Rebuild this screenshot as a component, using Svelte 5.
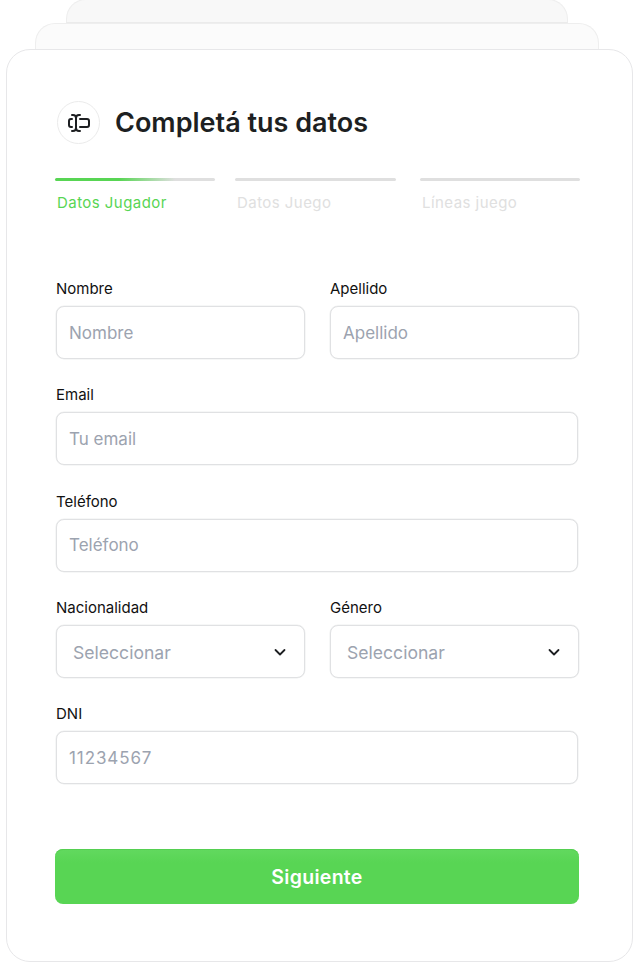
<script>
  const steps = [
    { label: 'Datos Jugador', active: true },
    { label: 'Datos Juego', active: false },
    { label: 'Líneas juego', active: false }
  ];
</script>

<div class="stack">
  <div class="sheet back-far"></div>
  <div class="sheet back-near"></div>

  <main class="card">
    <header class="head">
      <span class="badge">
        <svg width="24" height="24" viewBox="0 0 24 24" fill="none" stroke="#1d1f22" stroke-width="2" stroke-linecap="round" stroke-linejoin="round">
          <path d="M5 4h1a3 3 0 0 1 3 3 3 3 0 0 1 3-3h1" />
          <path d="M13 20h-1a3 3 0 0 1-3-3 3 3 0 0 1-3 3H5" />
          <path d="M5 16H4a2 2 0 0 1-2-2v-4a2 2 0 0 1 2-2h1" />
          <path d="M13 8h7a2 2 0 0 1 2 2v4a2 2 0 0 1-2 2h-7" />
          <path d="M9 7v10" />
        </svg>
      </span>
      <h1>Completá tus datos</h1>
    </header>

    <ol class="steps">
      {#each steps as step}
        <li class="step" class:active={step.active}>
          <span class="bar"></span>
          <span class="step-label">{step.label}</span>
        </li>
      {/each}
    </ol>

    <form class="form" on:submit|preventDefault>
      <div class="row two">
        <label class="field">
          <span>Nombre</span>
          <input type="text" placeholder="Nombre" />
        </label>
        <label class="field">
          <span>Apellido</span>
          <input type="text" placeholder="Apellido" />
        </label>
      </div>

      <label class="field">
        <span>Email</span>
        <input type="email" placeholder="Tu email" />
      </label>

      <label class="field">
        <span>Teléfono</span>
        <input type="tel" placeholder="Teléfono" />
      </label>

      <div class="row two">
        <label class="field">
          <span>Nacionalidad</span>
          <span class="select-wrap">
            <select><option>Seleccionar</option></select>
            <svg class="chevron" width="16" height="16" viewBox="0 0 16 16" fill="none" stroke="#1d1f22" stroke-width="1.8" stroke-linecap="round" stroke-linejoin="round">
              <path d="M3.5 6l4.5 4.5L12.5 6" />
            </svg>
          </span>
        </label>
        <label class="field">
          <span>Género</span>
          <span class="select-wrap">
            <select><option>Seleccionar</option></select>
            <svg class="chevron" width="16" height="16" viewBox="0 0 16 16" fill="none" stroke="#1d1f22" stroke-width="1.8" stroke-linecap="round" stroke-linejoin="round">
              <path d="M3.5 6l4.5 4.5L12.5 6" />
            </svg>
          </span>
        </label>
      </div>

      <label class="field">
        <span>DNI</span>
        <input class="dni" type="text" placeholder="11234567" />
      </label>

      <button type="submit">Siguiente</button>
    </form>
  </main>
</div>

<style>
  :global(body) {
    background: #fff;
    font-family: Inter, "Liberation Sans", sans-serif;
  }

  .stack {
    display: flex;
    flex-direction: column;
    height: 962px;
    overflow: hidden;
  }

  .sheet {
    border: 1px solid #eeeeee;
    border-bottom: 0;
    background: #fbfbfb;
    flex: none;
  }
  .back-far {
    height: 24px;
    margin: -1px 72px 0 66px;
    border-radius: 20px 20px 0 0;
    background: #f8f8f8;
    border-bottom: 1px solid #ebebeb;
    box-sizing: border-box;
  }
  .back-near {
    height: 26px;
    margin: 0 41px 0 35px;
    border-radius: 20px 20px 0 0;
    box-sizing: border-box;
  }

  .card {
    box-sizing: border-box;
    height: 913px;
    margin: 0 7px 0 6px;
    padding: 51px 54px 0 48px;
    background: #fff;
    border: 1px solid #e7e7e9;
    border-radius: 24px;
  }

  .head {
    display: flex;
    align-items: center;
    gap: 15px;
    padding-left: 2px;
  }
  .badge {
    box-sizing: border-box;
    width: 43px;
    height: 43px;
    display: flex;
    align-items: center;
    justify-content: center;
    border: 1px solid #ebebeb;
    border-radius: 50%;
  }
  h1 {
    margin: 0;
    font-size: 27px;
    font-weight: 600;
    line-height: 43px;
    color: #1d1f22;
  }

  .steps {
    display: flex;
    margin: 34px 0 0;
    padding: 0;
    list-style: none;
  }
  .step {
    flex: none;
    width: 160px;
    margin-right: 20px;
    display: flex;
    flex-direction: column;
    gap: 12px;
  }
  .step:nth-child(2) {
    width: 161px;
    margin-right: 24px;
  }
  .step:last-child {
    margin-right: 0;
  }
  .bar {
    height: 3px;
    border-radius: 2px;
    background: #dfdfdf;
  }
  .step.active .bar {
    background: linear-gradient(90deg, #58d554 0%, #58d554 40%, #dfdfdf 75%);
  }
  .step-label {
    padding-left: 2px;
    font-size: 15px;
    line-height: 20px;
    letter-spacing: 0.45px;
    color: #e0e0e0;
  }
  .step.active .step-label {
    color: #58d554;
  }

  .form {
    margin-top: 65px;
    display: flex;
    flex-direction: column;
    gap: 25.25px;
    padding-left: 1px;
  }
  .row.two {
    display: grid;
    grid-template-columns: 249px 249px;
    gap: 25px;
  }
  .field {
    display: flex;
    flex-direction: column;
    gap: 7px;
    font-size: 15px;
    line-height: 21px;
    color: #111;
  }
  input,
  select {
    box-sizing: border-box;
    width: 100%;
    height: 53px;
    padding: 0 12px;
    border: 1px solid #e0e1e3;
    box-shadow: 0 0 0 0.5px #eeefef;
    border-radius: 8px;
    background: #fff;
    font: inherit;
    font-size: 17px;
    color: #9ca3af;
    outline: none;
  }
  input::placeholder {
    color: #9ca3af;
    opacity: 1;
  }
  .dni {
    letter-spacing: 0.9px;
  }
  select {
    appearance: none;
    padding: 2px 0 0 16px;
    font-size: 17.6px;
  }
  .select-wrap {
    position: relative;
    display: block;
  }
  .chevron {
    position: absolute;
    right: 17px;
    top: 19px;
    pointer-events: none;
  }

  button {
    margin-top: 40px;
    margin-left: -1px;
    width: 524px;
    height: 55px;
    padding: 1px 0 0;
    border: 0;
    border-radius: 8px;
    background: linear-gradient(180deg, #62d95f 0%, #58d554 25%, #58d554 100%);
    box-shadow: inset 0 1px 0 #55cf51;
    color: #fff;
    font: inherit;
    font-size: 19.5px;
    font-weight: 600;
    letter-spacing: 0.3px;
  }
</style>
